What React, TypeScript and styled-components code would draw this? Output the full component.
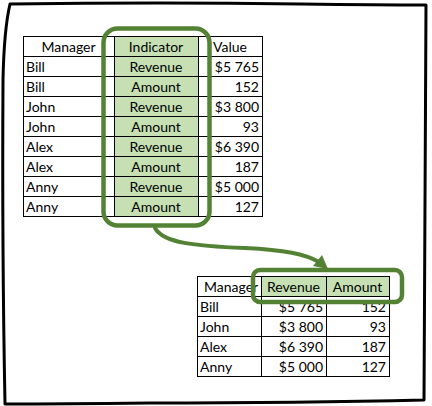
import { FC } from 'react';
import styled, { createGlobalStyle } from 'styled-components';

const GlobalStyle = createGlobalStyle`
  body {
    margin: 0;
    background: #fff;
    font-family: Lato, "Open Sans", "Liberation Sans", sans-serif;
  }
`;

const GREEN = '#548235';

type Row = { manager: string; indicator: string; value: string };

const rows: Row[] = [
  { manager: 'Bill', indicator: 'Revenue', value: '$5 765' },
  { manager: 'Bill', indicator: 'Amount', value: '152' },
  { manager: 'John', indicator: 'Revenue', value: '$3 800' },
  { manager: 'John', indicator: 'Amount', value: '93' },
  { manager: 'Alex', indicator: 'Revenue', value: '$6 390' },
  { manager: 'Alex', indicator: 'Amount', value: '187' },
  { manager: 'Anny', indicator: 'Revenue', value: '$5 000' },
  { manager: 'Anny', indicator: 'Amount', value: '127' },
];

const pivot = [
  { manager: 'Bill', revenue: '$5 765', amount: '152' },
  { manager: 'John', revenue: '$3 800', amount: '93' },
  { manager: 'Alex', revenue: '$6 390', amount: '187' },
  { manager: 'Anny', revenue: '$5 000', amount: '127' },
];

const App: FC = () => {
  return (
    <Page>
      <GlobalStyle />
      <Canvas>
        <Sheet $cols="91px 84px 64px" $left={23} $top={36}>
          <Cell $align="center">Manager</Cell>
          <Cell $align="center" $fill>Indicator</Cell>
          <Cell $indent={14}>Value</Cell>
          {rows.map((r, i) => (
            <Line key={i}>
              <Cell>{r.manager}</Cell>
              <Cell $align="center" $fill>{r.indicator}</Cell>
              <Cell $align="right">{r.value}</Cell>
            </Line>
          ))}
        </Sheet>

        <Sheet $cols="64px 65px 63px" $left={197} $top={59}>
          <Cell $align="center" $indent={6}>Manager</Cell>
          <Cell $align="center" $fill>Revenue</Cell>
          <Cell $align="center" $fill>Amount</Cell>
          {pivot.map((r, i) => (
            <Line key={i}>
              <Cell>{r.manager}</Cell>
              <Cell $align="right">{r.revenue}</Cell>
              <Cell $align="right">{r.amount}</Cell>
            </Line>
          ))}
        </Sheet>
      </Canvas>

      <Overlay width="432" height="406" viewBox="0 0 432 406">
        {/* hand drawn frame */}
        <path
          d="M10,4 Q160,2 300,4 Q380,5 426,5 Q425,200 424,400 Q300,403 150,403 Q60,404 5,404 Q2,250 3,80 Q4,30 10,4 Z"
          fill="none"
          stroke="#000"
          strokeWidth="3"
          strokeLinejoin="round"
        />
        {/* highlight around the indicator column */}
        <rect x="103.5" y="28.5" width="106" height="197" rx="14" fill="none" stroke={GREEN} strokeWidth="4.5" />
        {/* highlight around the new headers */}
        <rect x="253" y="270" width="149" height="32" rx="7" fill="none" stroke={GREEN} strokeWidth="4.5" />
        {/* arrow */}
        <path
          d="M155,228 C163,243 195,246 245,248 C285,250 305,254 319,262"
          fill="none"
          stroke={GREEN}
          strokeWidth="4"
          strokeLinecap="round"
        />
        <polygon points="328,269 313,266 322,255" fill={GREEN} />
      </Overlay>
    </Page>
  );
};

const Page = styled.div`
  position: relative;
  width: 432px;
  height: 406px;
  overflow: hidden;
  background: #fff;
`;

const Canvas = styled.div`
  display: flex;
  flex-direction: column;
  align-items: flex-start;
`;

const Sheet = styled.div<{ $cols: string; $left: number; $top: number }>`
  display: grid;
  grid-template-columns: ${({ $cols }) => $cols};
  grid-auto-rows: 20px;
  margin-left: ${({ $left }) => $left}px;
  margin-top: ${({ $top }) => $top}px;
  border-left: 1px solid #000;
  border-top: 1px solid #000;
  font-size: 14px;
  color: #000;
`;

const Line = styled.div`
  display: contents;
`;

const Cell = styled.div<{ $align?: 'left' | 'center' | 'right'; $fill?: boolean; $indent?: number }>`
  box-sizing: border-box;
  border-right: 1px solid #000;
  border-bottom: 1px solid #000;
  background: ${({ $fill }) => ($fill ? '#c6e0b4' : '#fff')};
  text-align: ${({ $align }) => $align || 'left'};
  padding: 0 3px 0 ${({ $indent }) => $indent ?? 2}px;
  line-height: 20px;
  white-space: nowrap;
  overflow: visible;
`;

const Overlay = styled.svg`
  position: absolute;
  inset: 0;
  pointer-events: none;
`;

export default App;
